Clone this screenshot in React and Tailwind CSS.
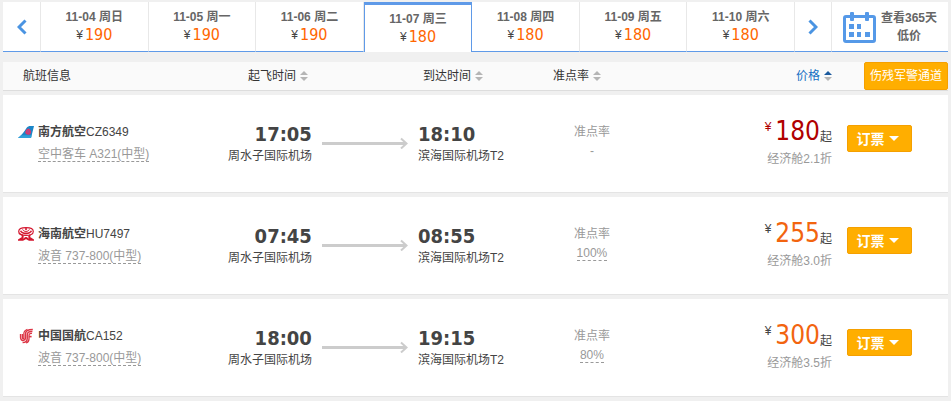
import React, { useState } from 'react'
import clsx from 'clsx'

const DAYS = [
  { date: '11-04', week: '周日', price: 190 },
  { date: '11-05', week: '周一', price: 190 },
  { date: '11-06', week: '周二', price: 190 },
  { date: '11-07', week: '周三', price: 180 },
  { date: '11-08', week: '周四', price: 180 },
  { date: '11-09', week: '周五', price: 180 },
  { date: '11-10', week: '周六', price: 180 },
]

const SouthernLogo = () => (
  <svg viewBox="0 0 16 14" className="w-4 h-3.5">
    <path d="M0 13 C4 10 6.5 6 8.5 3 C9.6 1.4 11 1 12.5 1 H16 L13 13 Z" fill="#1a86c8" />
    <path d="M0 13 L3.2 10.2 H13.7 L13 13 Z" fill="#2fa0da" />
    <path d="M7.2 7.6 C7.2 5.4 8.8 3.8 10.6 3.4 C12.6 4 13.4 6.2 12.8 8.2 C11.8 10.4 8.2 10.6 7.2 7.6 Z" fill="#d9386f" />
    <path d="M8.6 7.8 L10.4 5 L11 8.6" stroke="#8f5aa0" strokeWidth="0.6" fill="none" />
  </svg>
)

const HainanLogo = () => (
  <svg viewBox="0 0 16 14" className="w-4 h-3.5" fill="none" stroke="#d4172f">
    <path d="M8 0.6 C3.5 0.6 0.7 2.2 0.7 4.4 C0.7 7 4 8.4 8 8.4 C12 8.4 15.3 7 15.3 4.4 C15.3 2.2 12.5 0.6 8 0.6 Z" strokeWidth="1.2" />
    <path d="M2.6 3.8 C3.4 5.8 5.6 6.4 8 6.4 C10.4 6.4 12.6 5.8 13.4 3.8" strokeWidth="1.6" />
    <path d="M4.6 2.4 C5.4 4 6.6 4.4 8 4.4 C9.4 4.4 10.6 4 11.4 2.4" strokeWidth="1" />
    <circle cx="8" cy="2" r="1.1" fill="#d4172f" stroke="none" />
    <path d="M3.6 8.2 C5.4 9 5 10.6 3.6 11.4 L1.4 12.8 H4.8 C6.2 12.6 6.8 11.4 8 11 C9.2 11.4 9.8 12.6 11.2 12.8 H14.6 L12.4 11.4 C11 10.6 10.6 9 12.4 8.2" strokeWidth="1.9" />
  </svg>
)

const AirChinaLogo = () => (
  <svg viewBox="0 0 16 16" className="w-4 h-4" fill="none" stroke="#dc3545">
    <path d="M2.6 6 V9.6 C2.6 13.6 7.4 13.2 7.4 9.6 V6.4 C7.4 3 9.6 1.4 14.8 1.4" strokeWidth="1.5" />
    <path d="M4.4 6 V9.4 C4.4 11.4 5.8 11.2 5.8 9.4 V6 C5.8 3.4 7.2 2 9.4 1.2" strokeWidth="1.2" />
    <path d="M14.4 3.4 C11 3.2 9.2 4.4 9.2 7 V10.4 C9.2 13 7.6 14.4 4.6 14.6" strokeWidth="1.5" />
    <path d="M14 5.4 C12 5.2 11 6 11 7.5 V11 C11 13 9.8 14.4 8 15" strokeWidth="1.3" />
    <path d="M11 8.6 H13.6" strokeWidth="1.6" />
  </svg>
)

const FLIGHTS = [
  {
    airline: '南方航空', code: 'CZ6349', Logo: SouthernLogo, plane: '空中客车 A321(中型)',
    depart: '17:05', arrive: '18:10', rate: null, price: 180, discount: '2.1', lowest: true,
  },
  {
    airline: '海南航空', code: 'HU7497', Logo: HainanLogo, plane: '波音 737-800(中型)',
    depart: '07:45', arrive: '08:55', rate: '100%', price: 255, discount: '3.0',
  },
  {
    airline: '中国国航', code: 'CA152', Logo: AirChinaLogo, plane: '波音 737-800(中型)',
    depart: '18:00', arrive: '19:15', rate: '80%', price: 300, discount: '3.5',
  },
]

const Chevron = ({ left }) => (
  <svg viewBox="0 0 10 16" className={clsx('w-2.5 h-4', left && 'rotate-180')} fill="none">
    <path d="M1.5 1.5 L8 8 L1.5 14.5" stroke="#4a94e2" strokeWidth="3" />
  </svg>
)

const CalendarIcon = () => (
  <svg viewBox="0 0 34 32" className="w-[34px] h-8 shrink-0">
    <rect x="1.5" y="5.5" width="30" height="25" rx="1.5" fill="none" stroke="#5599e8" strokeWidth="3" />
    <g fill="#5599e8">
      <rect x="7" y="1" width="4" height="9" rx="1" />
      <rect x="22" y="1" width="4" height="9" rx="1" />
      <rect x="6" y="13" width="5" height="5" />
      <rect x="14" y="13" width="4" height="5" />
      <rect x="6" y="21" width="5" height="5" />
      <rect x="14" y="21" width="4" height="5" />
      <rect x="22" y="21" width="5" height="5" />
    </g>
  </svg>
)

const SortIcon = ({ active }) => (
  <svg viewBox="0 0 8 10" className="w-2 h-2.5">
    <path d="M4 0 L8 4 H0 Z" fill={active ? '#1b5a9e' : '#b5b5b5'} />
    <path d="M0 6 H8 L4 10 Z" fill="#b5b5b5" />
  </svg>
)

const SortButton = ({ label, active }) => (
  <button className={clsx('inline-flex items-center gap-1', active && 'text-[#1570c4]')}>
    {label}
    <SortIcon active={active} />
  </button>
)

const DayTab = ({ day, active, onClick }) => (
  <button
    onClick={onClick}
    className={clsx(
      'flex-1 flex flex-col items-center bg-white leading-[18px] border-[#5f9ae8]',
      active
        ? 'border-x border-t-3 pt-[5px]'
        : 'border-b pt-1.5 not-last:border-r not-last:border-r-[#e8e8e8]'
    )}
  >
    <span className="font-bold text-[#666]">{day.date} {day.week}</span>
    <span className="flex gap-0.5">
      <span>¥</span>
      <span className="font-[DejaVu_Sans_Condensed,Noto_Sans,sans-serif] text-base leading-[18px] text-[#f60]">{day.price}</span>
    </span>
  </button>
)

const FlightRow = ({ flight }) => {
  const { Logo } = flight
  return (
    <tr className="h-[97px] bg-white align-top shadow-[0_1px_0_#e4e4e4]">
      <td className="pt-[26px] pl-[15px] leading-[22px]">
        <div className="flex items-center gap-1">
          <Logo />
          <span><b>{flight.airline}</b>{flight.code}</span>
        </div>
        <div className="pl-5 text-[#999]">
          <span className="border-b border-dashed border-[#999]">{flight.plane}</span>
        </div>
      </td>
      <td className="pt-[27px] text-right">
        <div className="font-[DejaVu_Sans_Condensed,Noto_Sans,sans-serif] text-xl leading-6 font-bold">{flight.depart}</div>
        <div className="leading-5">周水子国际机场</div>
      </td>
      <td className="pt-[42px]">
        <svg viewBox="0 0 86 12" className="w-[86px] h-3 mx-auto" fill="none" stroke="#ccc">
          <path d="M0 6.5 H84" strokeWidth="3" />
          <path d="M79 1.5 L84.5 6.5 L79 11.5" strokeWidth="2" />
        </svg>
      </td>
      <td className="pt-[27px]">
        <div className="font-[DejaVu_Sans_Condensed,Noto_Sans,sans-serif] text-xl leading-6 font-bold">{flight.arrive}</div>
        <div className="leading-5">滨海国际机场T2</div>
      </td>
      <td className="pt-[26px] text-center text-[#999]">
        <div className="leading-[22px]">准点率</div>
        <div className="leading-4">
          {flight.rate ? <span className="border-b border-dashed border-[#999]">{flight.rate}</span> : '-'}
        </div>
      </td>
      <td className="pt-5 text-right">
        <div className="flex justify-end leading-8">
          <span className={clsx('pr-1 leading-6', flight.lowest && 'text-[#b00000]')}>¥</span>
          <span
            className={clsx(
              'font-[DejaVu_Sans_Condensed,Noto_Sans,sans-serif] text-[26px] leading-8',
              flight.lowest ? 'text-[#b00000]' : 'text-[#f2640f]'
            )}
          >
            {flight.price}
          </span>
          <span className="self-end leading-5">起</span>
        </div>
        <div className="leading-6 text-[#999]">经济舱{flight.discount}折</div>
      </td>
      <td className="pt-[30px] pl-[15px]">
        <button className="flex items-center justify-center gap-1 w-[65px] h-[27px] pr-1 rounded-xs border border-[#f5a000] bg-[#ffae00] text-sm font-bold text-white">
          订票
          <svg viewBox="0 0 10 5" className="w-2.5 h-[5px]">
            <path d="M0 0 H10 L5 5 Z" fill="#fff" />
          </svg>
        </button>
      </td>
    </tr>
  )
}

const App = () => {
  const [current, setCurrent] = useState('11-07')

  return (
    <div className="min-h-screen bg-[#f0f0f0] px-[3px] pt-0.5 font-[Liberation_Sans,Noto_Sans_CJK_SC,sans-serif] text-xs text-[#444]">
      <nav className="flex h-[50px]">
        <button aria-label="前一天" className="flex items-center justify-center w-[38px] bg-white border-b border-r border-[#5f9ae8] border-r-[#e8e8e8]">
          <Chevron left />
        </button>
        <div className="flex flex-1">
          {DAYS.map(day => (
            <DayTab key={day.date} day={day} active={day.date === current} onClick={() => setCurrent(day.date)} />
          ))}
        </div>
        <button aria-label="后一天" className="flex items-center justify-center w-[38px] bg-white border-b border-x border-[#5f9ae8] border-l-[#e8e8e8] border-r-[#e8e8e8]">
          <Chevron />
        </button>
        <a href="#calendar" className="flex items-center justify-center gap-1 w-[116px] bg-white border-b border-[#5f9ae8] text-center leading-[18px] font-bold text-[#666]">
          <CalendarIcon />
          <span>查看365天<br />低价</span>
        </a>
      </nav>

      <table className="w-full mt-[5px] table-fixed border-separate border-spacing-x-0 border-spacing-y-[5px]">
        <thead>
          <tr className="h-7 bg-[#fafafa] text-left text-[#333] shadow-[0_1px_0_#ddd]">
            <th className="w-[22%] p-0 pl-5 font-normal">航班信息</th>
            <th className="w-[101px] p-0 pr-1 text-right font-normal"><SortButton label="起飞时间" /></th>
            <th className="w-[106px] p-0"></th>
            <th className="w-[130px] p-0 pl-[5px] font-normal"><SortButton label="到达时间" /></th>
            <th className="w-[88px] p-0 pl-[5px] font-normal"><SortButton label="准点率" /></th>
            <th className="p-0 text-right font-normal"><SortButton label="价格" active /></th>
            <th className="w-[116px] p-0 text-right font-normal">
              <button className="block w-[84px] h-7 ml-auto rounded-xs border border-[#f5a000] bg-[#ffae00] text-white">伤残军警通道</button>
            </th>
          </tr>
        </thead>
        <tbody>
          {FLIGHTS.map(flight => <FlightRow key={flight.code} flight={flight} />)}
        </tbody>
      </table>
    </div>
  )
}

export default App
